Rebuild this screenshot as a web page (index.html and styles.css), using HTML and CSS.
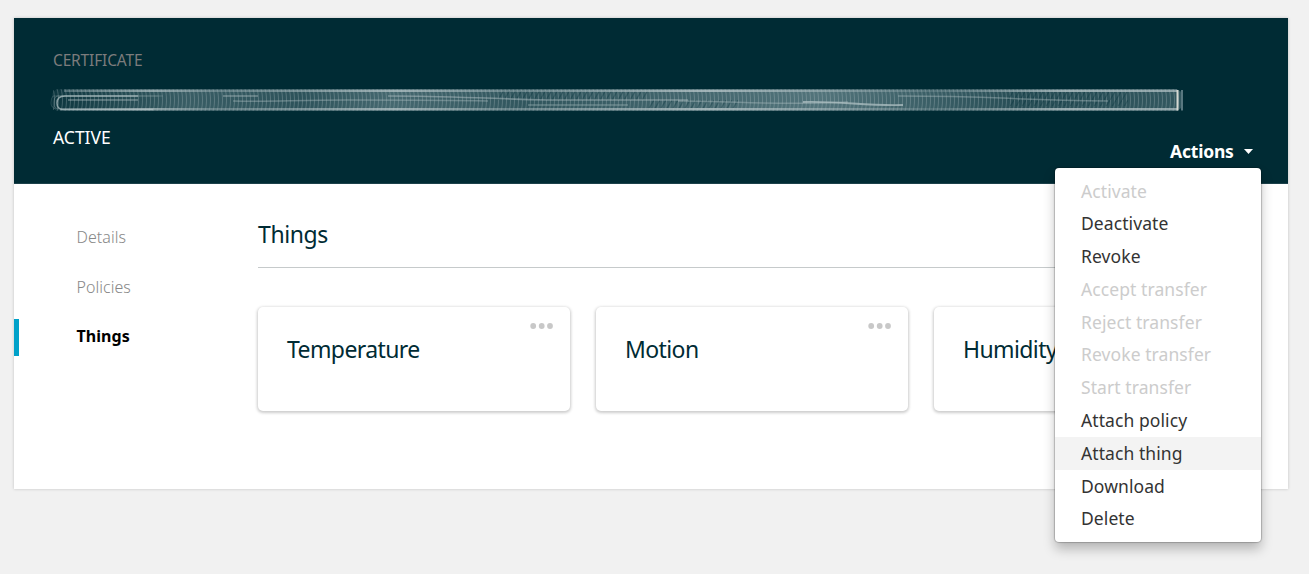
FILE: index.html
```html
<!DOCTYPE html>
<html lang="en">
<head>
<meta charset="utf-8">
<title>Certificate</title>
<link rel="stylesheet" href="styles.css">
</head>
<body>
<main class="panel">
  <header class="header">
    <div class="summary">
      <div class="eyebrow"><span>CERTIFICATE</span></div>
      <svg class="redacted" width="1140" height="26" viewBox="0 0 1140 26" aria-hidden="true">
        <defs>
          <linearGradient id="base" x1="0" x2="1">
            <stop offset="0" stop-color="#7f9ba1" stop-opacity=".1"/>
            <stop offset=".12" stop-color="#7f9ba1" stop-opacity=".45"/>
            <stop offset=".22" stop-color="#7f9ba1" stop-opacity=".35"/>
            <stop offset=".3" stop-color="#7f9ba1" stop-opacity=".55"/>
            <stop offset=".42" stop-color="#7f9ba1" stop-opacity=".38"/>
            <stop offset=".68" stop-color="#7f9ba1" stop-opacity=".65"/>
            <stop offset=".86" stop-color="#7f9ba1" stop-opacity=".3"/>
            <stop offset="1" stop-color="#7f9ba1" stop-opacity=".4"/>
          </linearGradient>
          <linearGradient id="rim" x1="0" x2="1">
            <stop offset="0" stop-color="#b5c4c7" stop-opacity=".35"/>
            <stop offset=".08" stop-color="#b5c4c7" stop-opacity=".7"/>
            <stop offset=".14" stop-color="#b5c4c7" stop-opacity=".35"/>
            <stop offset=".3" stop-color="#b5c4c7" stop-opacity=".75"/>
            <stop offset=".4" stop-color="#b5c4c7" stop-opacity=".4"/>
            <stop offset=".58" stop-color="#b5c4c7" stop-opacity=".8"/>
            <stop offset=".78" stop-color="#b5c4c7" stop-opacity=".2"/>
            <stop offset=".9" stop-color="#b5c4c7" stop-opacity=".8"/>
            <stop offset="1" stop-color="#b5c4c7" stop-opacity=".7"/>
          </linearGradient>
          <pattern id="ripple" width="4" height="22" patternUnits="userSpaceOnUse" y="3">
            <path d="M1 0C3 6 3 16 1 22" fill="none" stroke="#b5c4c7" stroke-opacity=".28"/>
          </pattern>
          <pattern id="slant" width="6" height="10" patternUnits="userSpaceOnUse" y="4">
            <path d="M0 10L6 0" fill="none" stroke="#002b34" stroke-opacity=".3" stroke-width="1.3"/>
          </pattern>
        </defs>
        <rect x="4" y="3.500" width="1130" height="21" rx="6" fill="url(#base)"/>
        <rect x="3" y="3" width="1130" height="22" rx="6" fill="url(#ripple)"/>
        <path d="M450 5H600V14H450zM600 14H690V22H600zM960 6H1080V20H960z" fill="url(#slant)"/>
        <rect x="16" y="3.500" width="1113" height="2.500" fill="url(#rim)"/>
        <rect x="12" y="22" width="1118" height="2.500" fill="url(#rim)"/>
        <g fill="none" stroke="#afc0c3">
          <path d="M90 10H17Q9 10 9 17Q9 23.500 15 23.500H105" stroke-width="1.500" stroke-opacity=".75"/>
          <path d="M115 10H9Q6 11 6 17Q6 23 11 23" stroke-opacity=".3"/>
          <path d="M110 10H5Q3 12 3 17Q3 22 8 23" stroke-opacity=".22"/>
          <path d="M20 14H90M175 10H210M340 10C400 10 420 12 500 14H640" stroke-width="1.600" stroke-opacity=".5"/>
          <path d="M185 15C225 16 245 14 300 14S400 14 440 15M480 19H580M630 15C690 15 730 20 800 16M850 10C950 10 960 14 1060 15" stroke-width="1.500" stroke-opacity=".4"/>
          <path d="M755 16C795 15 815 20 855 19" stroke-width="1.800" stroke-opacity=".75"/>
        </g>
        <path d="M1129.500 4V24.500" stroke="#d5d8d2" stroke-width="2"/>
        <path d="M1134 4V24.500" stroke="#58777f" stroke-width="2"/>
      </svg>
      <div class="status"><span>ACTIVE</span></div>
    </div>
    <div class="actions">
      <div class="actions-button"><span class="actions-label">Actions</span>
        <svg width="9" height="5" viewBox="0 0 9 5"><path d="M0 0H9L4.500 5Z" fill="#fff"/></svg>
      </div>
      <div class="menu">
        <div class="item disabled"><span>Activate</span></div>
        <div class="item"><span>Deactivate</span></div>
        <div class="item"><span>Revoke</span></div>
        <div class="item disabled"><span>Accept transfer</span></div>
        <div class="item disabled"><span>Reject transfer</span></div>
        <div class="item disabled"><span>Revoke transfer</span></div>
        <div class="item disabled"><span>Start transfer</span></div>
        <div class="item"><span>Attach policy</span></div>
        <div class="item hover"><span>Attach thing</span></div>
        <div class="item"><span>Download</span></div>
        <div class="item"><span>Delete</span></div>
      </div>
    </div>
  </header>
  <div class="body">
    <nav class="nav">
      <div class="link"><span>Details</span></div>
      <div class="link"><span>Policies</span></div>
      <div class="link current"><span>Things</span></div>
    </nav>
    <section class="content">
      <h1 class="title"><span>Things</span></h1>
      <div class="cards">
        <article class="card"><svg class="dots" width="24" height="6" viewBox="0 0 24 6"><g fill="#c8c8c8"><circle cx="3.200" cy="3" r="2.900"/><circle cx="11.700" cy="3" r="2.900"/><circle cx="20" cy="3" r="2.900"/></g></svg><span class="name">Temperature</span></article>
        <article class="card"><svg class="dots" width="24" height="6" viewBox="0 0 24 6"><g fill="#c8c8c8"><circle cx="3.200" cy="3" r="2.900"/><circle cx="11.700" cy="3" r="2.900"/><circle cx="20" cy="3" r="2.900"/></g></svg><span class="name">Motion</span></article>
        <article class="card"><svg class="dots" width="24" height="6" viewBox="0 0 24 6"><g fill="#c8c8c8"><circle cx="3.200" cy="3" r="2.900"/><circle cx="11.700" cy="3" r="2.900"/><circle cx="20" cy="3" r="2.900"/></g></svg><span class="name">Humidity</span></article>
      </div>
    </section>
  </div>
</main>
</body>
</html>
```
FILE: styles.css
```css
* { box-sizing: border-box; }
body {
  margin: 0;
  padding: 18px 21px 0 14px;
  height: 574px;
  overflow: hidden;
  background: #f1f1f1;
  font-family: "Noto Sans", sans-serif;
}
.panel {
  height: 471px;
  background: #fff;
  box-shadow: 0 0 3px rgba(0, 0, 0, .2);
}
.header {
  display: flex;
  height: 166px;
  background: #002b34;
  border-bottom: 1px solid #1c414a;
}
.summary {
  display: flex;
  flex-direction: column;
  width: 1140px;
  padding-top: 31px;
}
.eyebrow {
  height: 22px;
  padding-left: 39px;
  line-height: 22px;
  font-size: 15.500px;
  letter-spacing: -.15px;
  color: #7c7c7c;
}
.redacted { display: block; margin: 15px 0 12px 34px; }
.status {
  height: 26px;
  padding-left: 39px;
  line-height: 26px;
  font-size: 17.500px;
  color: #fff;
}
.actions {
  position: relative;
  flex: 1;
  padding-top: 120px;
}
.actions-button {
  display: flex;
  align-items: center;
  gap: 10px;
  margin-left: 16px;
  height: 26px;
  color: #fff;
  font-size: 17.500px;
  font-weight: 700;
  white-space: nowrap;
}
.actions-label { width: 64px; letter-spacing: -.2px; }
.menu {
  position: absolute;
  z-index: 2;
  top: 150px;
  right: 27px;
  width: 206px;
  padding: 6.500px 0;
  background: #fff;
  border-radius: 4px;
  box-shadow: 0 0 1px 1px rgba(0, 0, 0, .2), 0 7px 12px rgba(0, 0, 0, .25);
}
.item {
  height: 32.800px;
  padding-left: 26px;
  line-height: 32.200px;
  font-size: 17.500px;
  letter-spacing: .08px;
  color: #333;
  white-space: nowrap;
}
.disabled { color: #ccc; }
.hover { background: #f3f3f3; }
.body { display: flex; height: 305px; }
.nav { width: 244px; padding-top: 36px; }
.link {
  height: 37px;
  margin-bottom: 12.500px;
  padding-left: 62.500px;
  line-height: 34px;
  font-size: 16px;
  font-weight: 300;
  letter-spacing: .05px;
  color: #888;
}
.current {
  border-left: 5px solid #00a1c9;
  padding-left: 57.500px;
  line-height: 34.500px;
  font-weight: 700;
  color: #000;
}
.content { width: 990px; }
.title {
  height: 84px;
  margin: 0;
  padding-top: 34px;
  border-bottom: 1px solid #c6cacb;
  line-height: 32px;
  font-size: 23px;
  font-weight: 400;
  letter-spacing: -.4px;
  color: #002b34;
}
.cards {
  display: grid;
  grid-template-columns: repeat(3, 312px);
  gap: 26px;
  padding-top: 39px;
}
.card {
  display: flex;
  flex-direction: column;
  height: 104px;
  padding: 16px 16px 0 29px;
  border-radius: 5px;
  background: #fff;
  box-shadow: 0 1px 3px 1px rgba(0, 0, 0, .2);
}
.dots { align-self: flex-end; }
.name {
  padding-top: 4px;
  line-height: 32px;
  font-size: 23px;
  letter-spacing: -.6px;
  color: #002b34;
}
```
